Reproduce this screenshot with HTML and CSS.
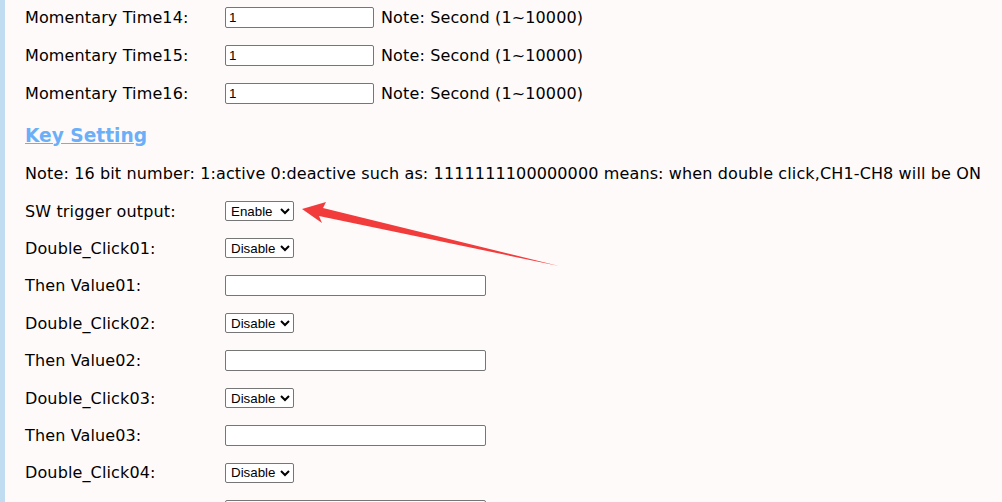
FILE: index.html
```html
<!DOCTYPE html>
<html>
<head>
<meta charset="utf-8">
<link rel="stylesheet" href="styles.css">
</head>
<body>
<div class="page">
  <div class="content">
    <div class="row top"><span class="label">Momentary Time14:</span><input class="num" type="text" value="1"><span class="note">Note: Second (1~10000)</span></div>
    <div class="row top"><span class="label">Momentary Time15:</span><input class="num" type="text" value="1"><span class="note">Note: Second (1~10000)</span></div>
    <div class="row top"><span class="label">Momentary Time16:</span><input class="num" type="text" value="1"><span class="note">Note: Second (1~10000)</span></div>
    <h2 class="heading"><a href="#">Key Setting</a></h2>
    <div class="row"><span>Note: 16 bit number: 1:active 0:deactive such as: 1111111100000000 means: when double click,CH1-CH8 will be ON</span></div>
    <div class="row"><span class="label">SW trigger output:</span><select class="sel"><option>Enable</option></select></div>
    <div class="row"><span class="label">Double_Click01:</span><select class="sel"><option>Disable</option></select></div>
    <div class="row"><span class="label">Then Value01:</span><input class="val" type="text"></div>
    <div class="row"><span class="label">Double_Click02:</span><select class="sel"><option>Disable</option></select></div>
    <div class="row"><span class="label">Then Value02:</span><input class="val" type="text"></div>
    <div class="row"><span class="label">Double_Click03:</span><select class="sel"><option>Disable</option></select></div>
    <div class="row"><span class="label">Then Value03:</span><input class="val" type="text"></div>
    <div class="row"><span class="label">Double_Click04:</span><select class="sel"><option>Disable</option></select></div>
    <div class="row"><span class="label">Then Value04:</span><input class="val" type="text"></div>
  </div>
  <svg class="arrow" width="1002" height="502" viewBox="0 0 1002 502">
    <polygon points="302,209 326,202 323,208 559,266 319,216 322,223" fill="#f23c3c"/>
  </svg>
</div>
</body>
</html>
```
FILE: styles.css
```css
html, body {
  margin: 0;
  padding: 0;
  background: #fffafa;
  overflow: hidden;
}
.page {
  position: relative;
  width: 1002px;
  height: 502px;
  border-left: 5px solid #bfdcf0;
  box-sizing: border-box;
  overflow: hidden;
}
.content {
  padding-left: 20px;
  margin-top: -2px;
  font-family: "DejaVu Sans", Verdana, sans-serif;
  font-size: 16px;
  letter-spacing: 0.13px;
  color: #000;
}
.row {
  display: flex;
  align-items: center;
  height: 37.4px;
  white-space: nowrap;
}
.row.top {
  height: 38px;
}
.label {
  width: 200px;
  flex: none;
}
.heading {
  margin: 0;
  height: 43px;
  display: flex;
  align-items: center;
  padding-top: 3px;
  box-sizing: border-box;
  font-size: 18.6px;
  letter-spacing: 0;
  font-weight: bold;
}
.heading a {
  color: #6aaff8;
  text-decoration: underline;
}
input, select {
  font-family: Arial, "Liberation Sans", sans-serif;
  font-size: 13.33px;
  letter-spacing: 0;
  box-sizing: border-box;
  border: 1px solid #767676;
  border-radius: 2px;
  background: #fff;
  margin: 0;
  color: #000;
}
.num {
  width: 149px;
  height: 21px;
  padding: 1px 3px;
  margin-right: 7px;
}
.val {
  width: 261px;
  height: 21px;
  padding: 1px 3px;
}
.sel {
  width: 69px;
  height: 20px;
  padding: 0 1px;
}
.arrow {
  position: absolute;
  left: -5px;
  top: 0;
  pointer-events: none;
}
```
